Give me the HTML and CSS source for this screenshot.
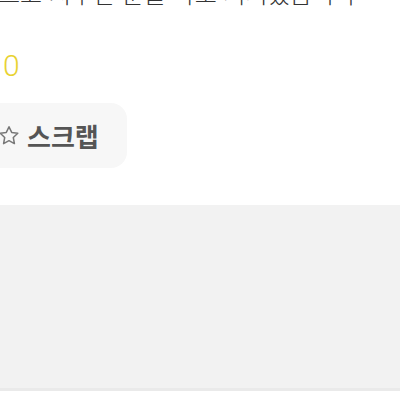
FILE: index.html
```html
<!DOCTYPE html>
<html lang="ko">
<head>
    <meta charset="UTF-8">
    <meta name="viewport" content="width=device-width, initial-scale=1.0">
    <title>스크랩</title>
    <link rel="stylesheet" href="styles.css">
</head>
<body>

    <div class="post">
        <!-- Last line of the post body, cut off at the top -->
        <p class="post-text">르고 지루한 분들 바로 저희였습니다</p>

        <div class="like-count">0</div>

        <button class="scrap-button">
            <svg class="star" viewBox="0 0 24 24">
                <path d="M12 2.8l2.7 5.6 6.1.8-4.5 4.3 1.1 6.1L12 16.7l-5.4 2.9 1.1-6.1-4.5-4.3 6.1-.8z"
                      fill="none" stroke="#777" stroke-width="1.5" stroke-linejoin="round"/>
            </svg>
            <span>스크랩</span>
        </button>
    </div>

    <div class="comment-area"></div>

</body>
</html>
```
FILE: styles.css
```css
body {
    margin: 0;
    padding: 0;
    background-color: #ffffff;
    font-family: "Noto Sans CJK KR", "Noto Sans", sans-serif;
    overflow: hidden;
}
.post {
    display: flow-root;
    margin-left: -18px;
    height: 205px;
}
.post-text {
    margin: -22px 0 0 16px;
    font-size: 24px;
    line-height: 30px;
    font-weight: 300;
    color: #333333;
    white-space: nowrap;
}
.like-count {
    margin: 41px 0 0 21px;
    font-size: 30px;
    line-height: 34px;
    color: #e8d232;
    font-family: "Roboto", sans-serif;
    font-weight: 300;
}
.scrap-button {
    margin-top: 20px;
    display: flex;
    align-items: center;
    gap: 6px;
    height: 65px;
    padding: 0 28px 0 15px;
    border: none;
    border-radius: 16px;
    background-color: #f7f7f7;
    color: #555555;
    font-family: "Noto Sans CJK KR", sans-serif;
    font-size: 26px;
    font-weight: 700;
}
.star {
    width: 24px;
    height: 24px;
}
.comment-area {
    height: 183px;
    background-color: #f2f2f2;
    border-bottom: 3px solid #eaeaea;
}
```
